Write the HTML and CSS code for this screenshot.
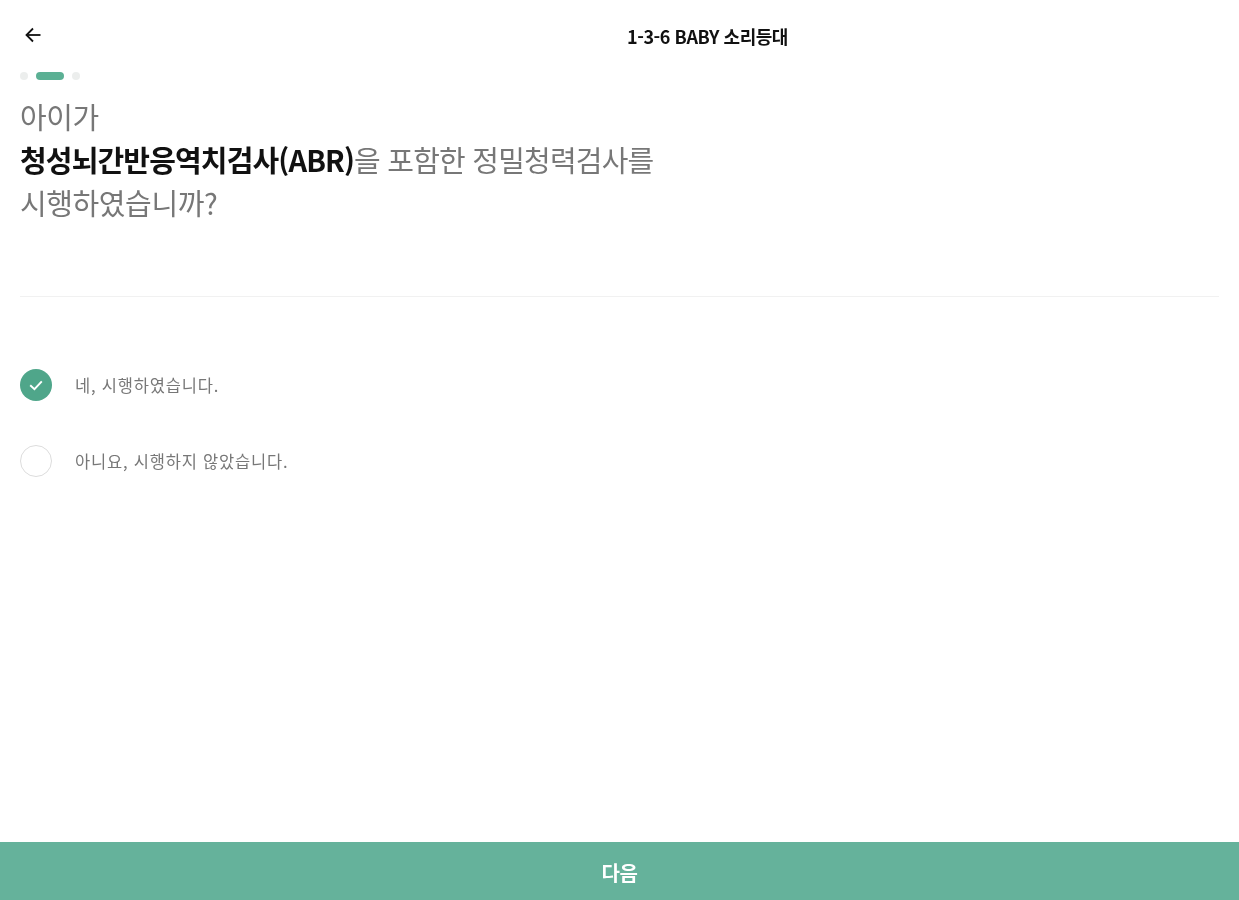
FILE: index.html
```html
<!DOCTYPE html>
<html lang="ko">
<head>
<meta charset="utf-8">
<title>1-3-6 BABY 소리등대</title>
<link rel="stylesheet" href="styles.css">
</head>
<body>
<div class="page">
  <header class="topbar">
    <svg class="back" width="18" height="18" viewBox="0 0 18 18" fill="none" stroke="#111" stroke-width="1.8"><path d="M16.5 9H2.5"/><path d="M9 2.5L2.5 9L9 15.5"/></svg>
    <h1 class="title">1-3-6 BABY 소리등대</h1>
  </header>
  <main class="content">
    <div class="steps"><span class="dot"></span><span class="bar"></span><span class="dot"></span></div>
    <h2 class="question">아이가<br><strong>청성뇌간반응역치검사(ABR)</strong><span class="tight">을 포함한 정밀청력검사를</span><br>시행하였습니까?</h2>
    <hr class="rule">
    <div class="options">
      <div class="option">
        <span class="radio checked"><svg width="18" height="18" viewBox="0 0 14 14" fill="none" stroke="#fff" stroke-width="1.5"><path d="M2.5 7.2L5.8 10.2L11.5 4.2"/></svg></span>
        <span class="label">네, 시행하였습니다.</span>
      </div>
      <div class="option">
        <span class="radio"></span>
        <span class="label">아니요, 시행하지 않았습니다.</span>
      </div>
    </div>
  </main>
  <button class="next">다음</button>
</div>
</body>
</html>
```
FILE: styles.css
```css
* { box-sizing: border-box; }
html, body { margin: 0; height: 100%; }
body { background: #fff; font-family: "Noto Sans CJK KR", "Noto Sans", sans-serif; overflow: hidden; }
.page { height: 900px; display: flex; flex-direction: column; filter: blur(0.45px); }
.topbar { height: 71px; flex: none; display: flex; align-items: center; justify-content: center; position: relative; }
.back { position: absolute; left: 24px; top: 26px; }
.title { margin: 0 0 0 176px; font-size: 18px; font-weight: 700; letter-spacing: -0.45px; color: #111; line-height: 1; }
.content { flex: 1; padding: 0 20px; }
.steps { display: flex; align-items: center; gap: 8px; height: 9px; }
.dot { width: 8px; height: 8px; border-radius: 50%; background: #eceeed; }
.bar { width: 28px; height: 8px; border-radius: 4px; background: #5bb094; }
.question { margin: 15px 0 0; font-size: 29px; font-weight: 400; line-height: 43px; letter-spacing: -0.4px; color: #777; }
.question strong { font-weight: 700; color: #111; letter-spacing: -0.85px; }
.tight { letter-spacing: -0.8px; }
.rule { margin: 72px 0 0; border: 0; border-top: 1px solid #f1f1f1; }
.options { margin-top: 72px; display: flex; flex-direction: column; gap: 44px; }
.option { display: flex; align-items: center; gap: 23px; height: 32px; }
.radio { width: 32px; height: 32px; border-radius: 50%; border: 1px solid #dcdcdc; display: flex; align-items: center; justify-content: center; flex: none; }
.radio.checked { background: #4fa68a; border: 0; }
.label { font-size: 16.5px; font-weight: 400; color: #777; letter-spacing: 0.8px; }
.next { height: 58px; flex: none; border: 0; width: 100%; padding-top: 3px; background: #65b29b; color: #fff; font: 700 20px "Noto Sans CJK KR", sans-serif; letter-spacing: -0.5px; }
```
